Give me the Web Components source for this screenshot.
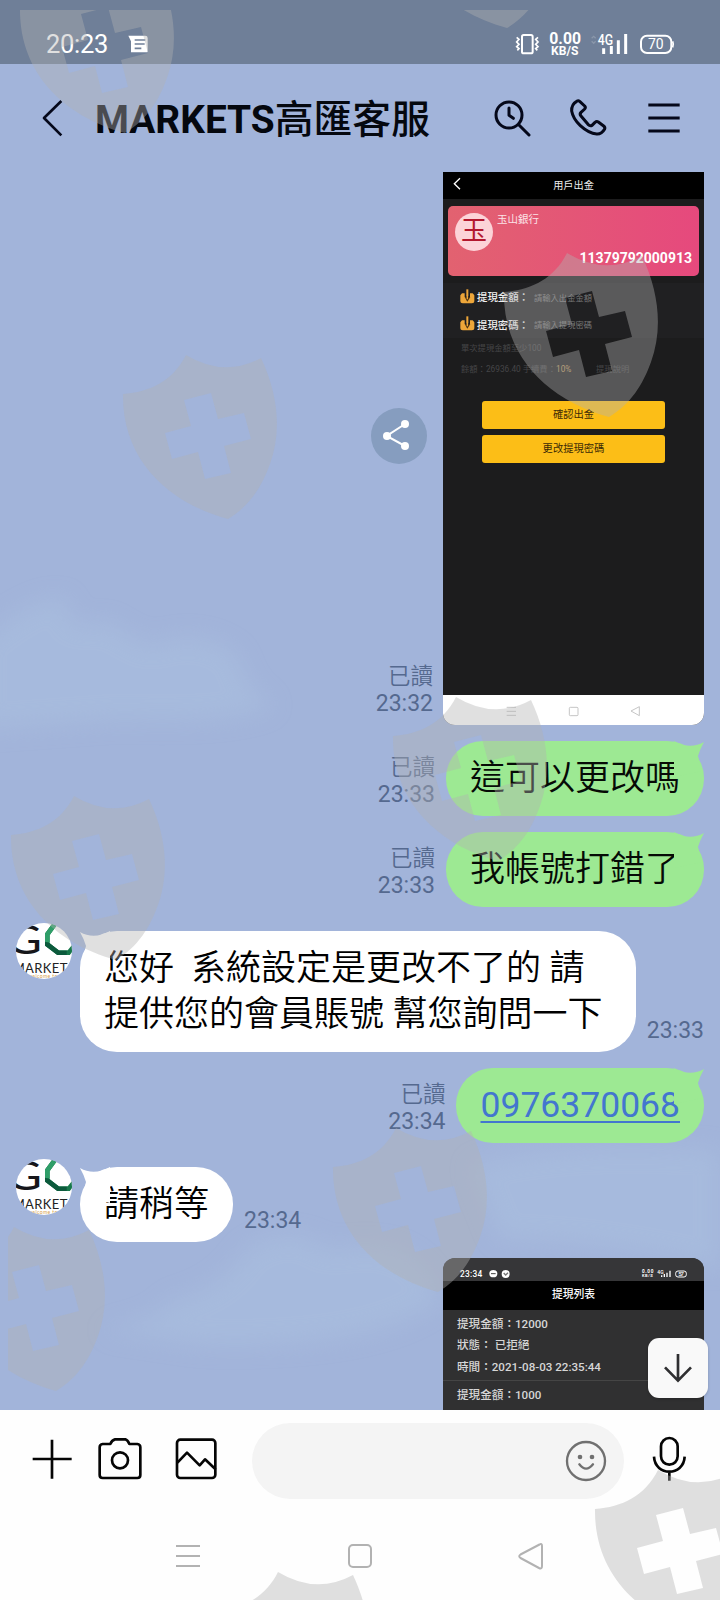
<!DOCTYPE html>
<html lang="zh-Hant">
<head>
<meta charset="utf-8">
<title>MARKETS高匯客服</title>
<style>
html,body{margin:0;padding:0}
body{width:720px;height:1600px;overflow:hidden;font-family:Roboto,"Noto Sans CJK TC",sans-serif;color:#05080f}
</style>
</head>
<body>
<chat-app></chat-app>
<script>
const define = (name, css, html) => customElements.define(name, class extends HTMLElement {
  constructor() {
    super();
    const t = document.createElement('template');
    t.innerHTML = `<style>*{box-sizing:border-box}svg{display:block;flex:none}${css}</style>` +
      (typeof html === 'function' ? html(this) : html).trim();
    this.attachShadow({ mode: 'open' }).append(t.content.cloneNode(true));
  }
});

define('status-bar', `
:host{display:flex;align-items:center;height:64px;background:#6f7f98;color:#fff;padding:24px 45px 0 46px;box-sizing:border-box}
.t{font-size:25.5px;line-height:40px;width:82px;letter-spacing:-.3px}
.sp{flex:1}`, `
<span class="t">20:23</span>
<svg width="22" height="20" viewBox="384 102 66 60"><path fill="#fff" d="M385 107H436Q443 107 443 114V157H393V124Z"/><path stroke="#6f7f98" stroke-width="5" d="M404 120H436M404 132H434M404 145H424"/></svg>
<span class="sp"></span>
<svg width="160" height="40" viewBox="465 72 480 120" fill="none" stroke="#fff">
<rect x="486" y="105" width="32" height="55" rx="5" stroke-width="6"/>
<path stroke-width="5" d="M470 112L477 118L470 126L477 133L470 140L477 146L472 151M534 112L527 118L534 126L527 133L534 140L527 146L532 151"/>
<g fill="#fff" stroke="none" font-family="Roboto,sans-serif">
<text x="568" y="133" font-size="50" font-weight="700" textLength="95" lengthAdjust="spacingAndGlyphs">0.00</text>
<text x="573" y="165" font-size="36" font-weight="700" textLength="82" lengthAdjust="spacingAndGlyphs">KB/S</text>
<text x="713" y="134" font-size="42" font-weight="500" textLength="46" lengthAdjust="spacingAndGlyphs">4G</text>
<text x="864" y="147" font-size="42" textLength="47" lengthAdjust="spacingAndGlyphs">70</text></g>
<path stroke="#8a97aa" stroke-width="4" d="M695 115L701 109L707 115M695 124L701 130L707 124"/>
<path stroke-width="9" d="M731 145V162M754 138V162M775 121V162M797 102V162"/>
<rect x="843" y="107" width="91" height="52" rx="18" stroke-width="6"/><path stroke-width="5" d="M938 124Q942 133 938 142"/>
</svg>`);

define('chat-header', `
:host{display:flex;align-items:center;height:108px;padding:0 36px 0 32px;box-sizing:border-box}
h1{margin:3px 0 0 23px;flex:1;font-size:38.8px;line-height:50px;font-weight:700;white-space:nowrap}
h1 b{font-weight:500}
nav{display:flex;gap:36px}
svg{fill:none;stroke:#05081a;stroke-width:9;stroke-linecap:round;stroke-linejoin:round}`, `
<svg width="40" height="40" viewBox="96 294 120 120"><path stroke-linecap="butt" stroke-width="8" d="M184 303L132 354L184 406"/></svg>
<h1>MARKETS<b>高匯客服</b></h1>
<nav>
<svg width="40" height="40" viewBox="396 294 120 120"><circle cx="447" cy="345" r="39"/><path d="M477 375L507 405M447 324V346L460 355"/></svg>
<svg width="40" height="40" viewBox="624 294 120 120"><path d="M650 304Q634 313 635 333Q639 356 661 377Q686 400 710 402Q725 403 734 387Q736 382 731 378L715 366Q710 363 705 367L696 376Q690 379 684 373L663 348Q658 342 663 337L674 327Q678 323 674 318L659 304Q655 301 650 304Z"/></svg>
<svg width="40" height="40" viewBox="852 294 120 120"><path stroke-linecap="butt" d="M865 315H959M865 354H959M865 393H959"/></svg>
</nav>`);

/* Read marker and time beside a message */
define('msg-meta', `
:host{display:block;text-align:right;color:#55698f;font-size:23px;line-height:27px;padding-bottom:8px;white-space:nowrap}
::slotted(*){display:block;font-weight:350;font-size:22.5px}`, `<slot></slot>`);

define('msg-row', `
:host{display:flex;align-items:flex-end;gap:11px;padding:0 16px}
:host([mine]){justify-content:flex-end}
:host([in]){padding-top:8px;gap:11px}
:host([tight]){gap:10px}
.a{align-self:flex-start;margin:-8px -3px 0 0}`, el => `${el.hasAttribute('in') ? '<span class="a"><user-avatar></user-avatar></span>' : ''}<slot></slot>`);

define('user-avatar', `:host{display:block;width:56px;height:56px;border-radius:50%;overflow:hidden;background:#fff}`, `
<svg width="56" height="56" viewBox="48 430 168 168">
<text x="18" y="524" font-family="Lato,sans-serif" font-size="122" fill="#16161a" textLength="108" lengthAdjust="spacingAndGlyphs">G</text>
<path d="M168 428L142 464V494L174 519H206L222 500" fill="none" stroke="#17784b" stroke-width="14"/>
<path d="M170 426L142 464V488" fill="none" stroke="#2f9e68" stroke-width="14"/>
<path d="M135 486L148 490L178 513H200V526H172L135 498Z" fill="#0c5a3c"/>
<text x="38" y="579" font-family="Lato,sans-serif" font-size="39" fill="#222" textLength="164">MARKET</text>
<text x="84" y="596" font-family="Lato,sans-serif" font-size="15" fill="#d6a04a" textLength="88">welcome to</text>
</svg>`);

define('chat-bubble', `
:host{display:block;position:relative;background:#9de993;border-radius:37px;padding:14.5px 24px;font-size:35px;font-weight:350;line-height:46px;white-space:pre;color:#060a06;min-height:75px;box-sizing:border-box}
:host([white]){background:#fff;color:#000}
.tail{position:absolute;top:0;right:0}
:host([white]) .tail{right:auto;left:0;transform:scaleX(-1)}
::slotted(a){display:block;height:46px;line-height:45px;color:#4376cf;font-weight:400;font-size:35.5px;text-decoration:underline;text-decoration-thickness:2px;text-underline-offset:4px}`,
`<svg class="tail" width="30" height="36" viewBox="0 0 30 36"><path style="fill:var(--tail,#9de993)" d="M0 0Q16 9 30 1Q26 8 24 15L28 30L0 36Z"/></svg><slot></slot>`);

define('share-button', `:host{display:flex;width:56px;height:56px;border-radius:50%;background:#869dbf;align-self:center;margin-bottom:25px}`, `
<svg width="56" height="56" viewBox="33 729 168 168"><path d="M135 777L80 813L135 843" fill="none" stroke="#fff" stroke-width="6"/><g fill="#fff"><circle cx="135" cy="777" r="12"/><circle cx="81" cy="813" r="12"/><circle cx="135" cy="843" r="12"/></g></svg>`);

define('withdraw-shot', `
:host{display:flex;flex-direction:column;width:261px;height:553px;border-radius:0 0 12px 12px;overflow:hidden;background:#1c1c1d;color:#eee}
header{height:27px;background:#000;display:grid;grid-template-columns:28px 1fr 28px;align-items:center;text-align:center;font-size:10.2px;padding-bottom:3px}
.card{margin:7px 5px 0;height:70px;border-radius:5px;background:linear-gradient(90deg,#e26270,#e6497d);display:grid;grid-template-columns:41px 1fr;padding:7px 7px 9px}
.ic{width:38px;height:38px;border-radius:50%;background:#fcd3d8;color:#b3172e;font-size:26px;line-height:36px;text-align:center}
.bank{font-size:10.5px;line-height:13px;padding-left:1px;color:#fbe4e8}
.no{grid-column:1/3;align-self:end;text-align:right;font-weight:700;font-size:14px;line-height:18px;margin-top:-16px;color:#fff}
.form{margin-top:7px;height:55px;background:#202022;padding:0 16px 0 17px}
.row{display:flex;align-items:center;height:27.5px;font-size:10.4px;font-weight:500}
.row i{font-style:normal;font-size:8.3px;color:#777;width:66px;margin-left:5px;font-weight:400}
.row svg{margin-right:2px}
.n{font-size:8.3px;line-height:21px;padding-left:18px;color:#454547;white-space:pre}
.n em{font-style:normal;color:#b8925a}
.b{width:183px;height:28px;margin:0 auto 6px;background:#fcbe17;border-radius:3px;color:#3b2a06;font-size:10.3px;line-height:27px;text-align:center}
.sp{flex:1}
.gap{height:21px}
footer{height:30px;background:#fff}`, `
<header><svg width="28" height="20" viewBox="249 27 84 60"><path d="M300 40L283 56L300 73" fill="none" stroke="#fff" stroke-width="4"/></svg><span>用戶出金</span></header>
<div class="card"><div class="ic">玉</div><div class="bank">玉山銀行</div><div class="no">11379792000913</div></div>
<div class="form">${[['提現金額：','請輸入出金金額'],['提現密碼：','請輸入提現密碼']].map(r=>`<div class="row"><svg width="15" height="16" viewBox="0 0 45 48"><path d="M1 19L6 13H14V24H30V13H38L43 19V37Q43 43 36 43H8Q1 43 1 37Z" fill="#eda63a"/><path d="M22 1V22" stroke="#eda63a" stroke-width="6"/><path d="M14 24H31L22 38Z" fill="#4a3213"/><path d="M22 20V31" stroke="#eda63a" stroke-width="4"/></svg><span>${r[0]}</span><i>${r[1]}</i></div>`).join('')}</div>
<div class="n">單次提現金額至少100</div>
<div class="n">餘額：26936.40 手續費：<em>10%</em>            提現說明</div>
<div class="gap"></div>
<div class="b">確認出金</div><div class="b">更改提現密碼</div><div class="sp"></div>
<footer><svg width="261" height="30" viewBox="249 165 783 90" fill="none" stroke="#b9b9b9" stroke-width="2.5"><path d="M440 202H468M440 214H468M440 226H468"/><rect x="628" y="202" width="26" height="25" rx="3"/><path d="M838 200V227L813 213Z"/></svg></footer>`);

define('list-shot', `
:host{display:flex;flex-direction:column;width:261px;height:152px;border-radius:12px 12px 0 0;overflow:hidden;background:#303031;color:#d6d6d6;font-size:11.6px;font-weight:500;flex:none}
.s{height:23px;background:#363638}
.t{height:29px;background:#000;color:#fff;font-size:10.8px;line-height:28px;text-align:center}
.g{padding:4px 14px 0;height:71px;line-height:21.3px;border-bottom:1px solid #454545;white-space:pre}
.g+.g{padding-top:4px;border:0;height:auto}`, `
<div class="s"><svg width="261" height="23" viewBox="249 54 783 69" fill="#fff"><g font-family="Roboto,sans-serif"><text x="300" y="110" font-size="25" font-weight="500" textLength="67">23:34</text><text x="846" y="99" font-size="14" font-weight="700" textLength="34">0.00</text><text x="846" y="112" font-size="12" font-weight="700" textLength="32">KB/S</text><text x="955" y="108" font-size="18" textLength="17">57</text><text x="892" y="103" font-size="15">4G</text></g><ellipse cx="400" cy="101" rx="12" ry="11"/><path d="M393 101H407" stroke="#444" stroke-width="3"/><circle cx="437" cy="102" r="12"/><path d="M431 99L437 105L444 98" stroke="#777" stroke-width="4" fill="none"/><path d="M905 106V111M913 102V111M921 98V111M930 92V111" stroke="#fff" stroke-width="4"/><rect x="947" y="93" width="32" height="18" rx="7" fill="none" stroke="#fff" stroke-width="3"/></svg></div>
<div class="t">提現列表</div>
<div class="g">提現金額：12000
狀態： 已拒絕
時間：2021-08-03 22:35:44</div>
<div class="g">提現金額：1000</div>`);

define('chat-list', `
:host{display:flex;flex-direction:column;gap:16px;height:1238px;overflow:hidden;flex:none}`, `<slot></slot>`);

define('scroll-down', `:host{position:absolute;left:648px;top:1338px;width:60px;height:60px;border-radius:11px;background:#f9f9f9;box-shadow:0 1px 3px #0003}`, `
<svg width="60" height="60" viewBox="864 294 180 180"><path d="M954 342V422M915 382L954 422L993 382" fill="none" stroke="#2f2f31" stroke-width="8"/></svg>`);

define('input-bar', `
:host{display:flex;align-items:center;height:102px;background:#fefefe;padding:0 27px 0 28px;box-sizing:border-box}
svg{fill:none;stroke:#050505;stroke-width:8;stroke-linecap:round;stroke-linejoin:round}
.f{width:373px;height:76px;margin:0 21px 0 27px;border-radius:38px;background:#f4f4f4;display:flex;justify-content:flex-end;align-items:center;padding-right:14px}
.l,.m{margin-bottom:4px}`, `
<svg class="l" width="197" height="48" viewBox="84 105 591 144"><path stroke-linecap="butt" d="M98 177H215M156 119V236"/><path d="M308 132H331Q336 120 345 118H376Q383 120 388 132H412Q421 133 421 142V225Q421 234 412 234H308Q299 234 299 225V142Q299 133 308 132Z"/><circle cx="360" cy="181" r="24"/><rect x="531" y="119" width="115" height="115" rx="10"/><path d="M533 187L561 158L599 196L615 178L645 206"/></svg>
<div class="f"><svg width="48" height="48" viewBox="546 111 144 144" style="stroke:#707070;stroke-width:7"><circle cx="618" cy="183" r="57"/><path d="M598 193Q618 219 639 193"/><g fill="#707070" stroke="none"><circle cx="600" cy="171" r="7"/><circle cx="636" cy="171" r="7"/></g></svg></div>
<svg class="m" width="48" height="48" viewBox="795 105 144 144"><rect x="843" y="114" width="50" height="80" rx="25"/><path stroke-linecap="butt" d="M822 170C825 230 911 230 914 170M868 215V242"/></svg>`);

define('nav-bar', `:host{display:block;height:88px;background:#fefefe}`, `
<svg width="720" height="88" viewBox="0 0 720 88" fill="none" stroke="#b2b2b2" stroke-width="2"><path d="M176 34H200M176 44H200M176 54H200"/><rect x="349" y="33" width="22" height="22" rx="4"/><path stroke-linejoin="round" d="M539.500 32.500Q542 31 542 34V54Q542 57.500 539 56L520.500 46Q518 44 520.500 42.500Z"/></svg>`);

/* Faint clouds of the chat wallpaper */
define('sky-clouds', `:host{position:absolute;inset:0;pointer-events:none}`, `
<svg width="720" height="1410"><filter id="b"><feGaussianBlur stdDeviation="11"/></filter><g filter="url(#b)" fill="#abc1e0" opacity=".5"><path d="M-20 640Q40 590 68 600Q68 635 105 620Q130 635 150 645Q200 625 238 655Q245 690 275 705Q240 725 120 720L-20 730Z"/><path d="M100 1330Q160 1320 170 1300Q220 1290 245 1250Q290 1220 330 1250Q420 1230 440 1300Q380 1350 200 1345Z"/><path d="M470 1165Q560 1140 720 1150V1270Q600 1240 500 1240Z"/></g></svg>`);

define('shield-marks', `:host{position:absolute;inset:0;pointer-events:none}`, () => {
  const shield = 'M-22-81Q16-58 53-78C70-42 74-5 62 28C54 50 42 70 20 83C-42 66-86 22-85-42C-58-44-35-55-22-81ZM-24-36L-17-10L-43-3L-36 23L-10 16L-3 43L23 37L16 10L43 3L36-23L10-17L3-43Z';
  const at = [[105,50],[487,-55],[589,334],[208,436],[478,778],[96,877],[418,1209],[36,1308],[680,1551],[300,1653]];
  return `<svg width="720" height="1600"><clipPath id="c"><path d="M8 10H720V1600H8Z"/></clipPath><g clip-path="url(#c)" fill="#b1b1b1" fill-opacity=".4" fill-rule="evenodd">${at.map(p => `<path transform="translate(${p})" d="${shield}"/>`).join('')}</g></svg>`;
});

define('chat-app', `
:host{display:flex;flex-direction:column;position:relative;width:720px;height:1600px;background:#a2b4da;overflow:hidden}
status-bar,chat-header,chat-list,input-bar,nav-bar{flex:none;position:relative}
[white]{--tail:#fff}
share-button{margin-right:-61px}`, `
<sky-clouds></sky-clouds>
<status-bar></status-bar>
<chat-header></chat-header>
<chat-list>
<msg-row mine tight><share-button></share-button><msg-meta><span>已讀</span>23:32</msg-meta><withdraw-shot></withdraw-shot></msg-row>
<msg-row mine><msg-meta><span>已讀</span>23:33</msg-meta><chat-bubble>這可以更改嗎</chat-bubble></msg-row>
<msg-row mine><msg-meta><span>已讀</span>23:33</msg-meta><chat-bubble>我帳號打錯了</chat-bubble></msg-row>
<msg-row in><chat-bubble white style="width:556px">您好  系統設定是更改不了的 請<br>提供您的會員賬號 幫您詢問一下</chat-bubble><msg-meta>23:33</msg-meta></msg-row>
<msg-row mine><msg-meta><span>已讀</span>23:34</msg-meta><chat-bubble><a>0976370068</a></chat-bubble></msg-row>
<msg-row in><chat-bubble white>請稍等</chat-bubble><msg-meta>23:34</msg-meta></msg-row>
<msg-row mine><list-shot></list-shot></msg-row>
</chat-list>
<input-bar></input-bar>
<nav-bar></nav-bar>
<scroll-down></scroll-down>
<shield-marks></shield-marks>`);
</script>
</body>
</html>
